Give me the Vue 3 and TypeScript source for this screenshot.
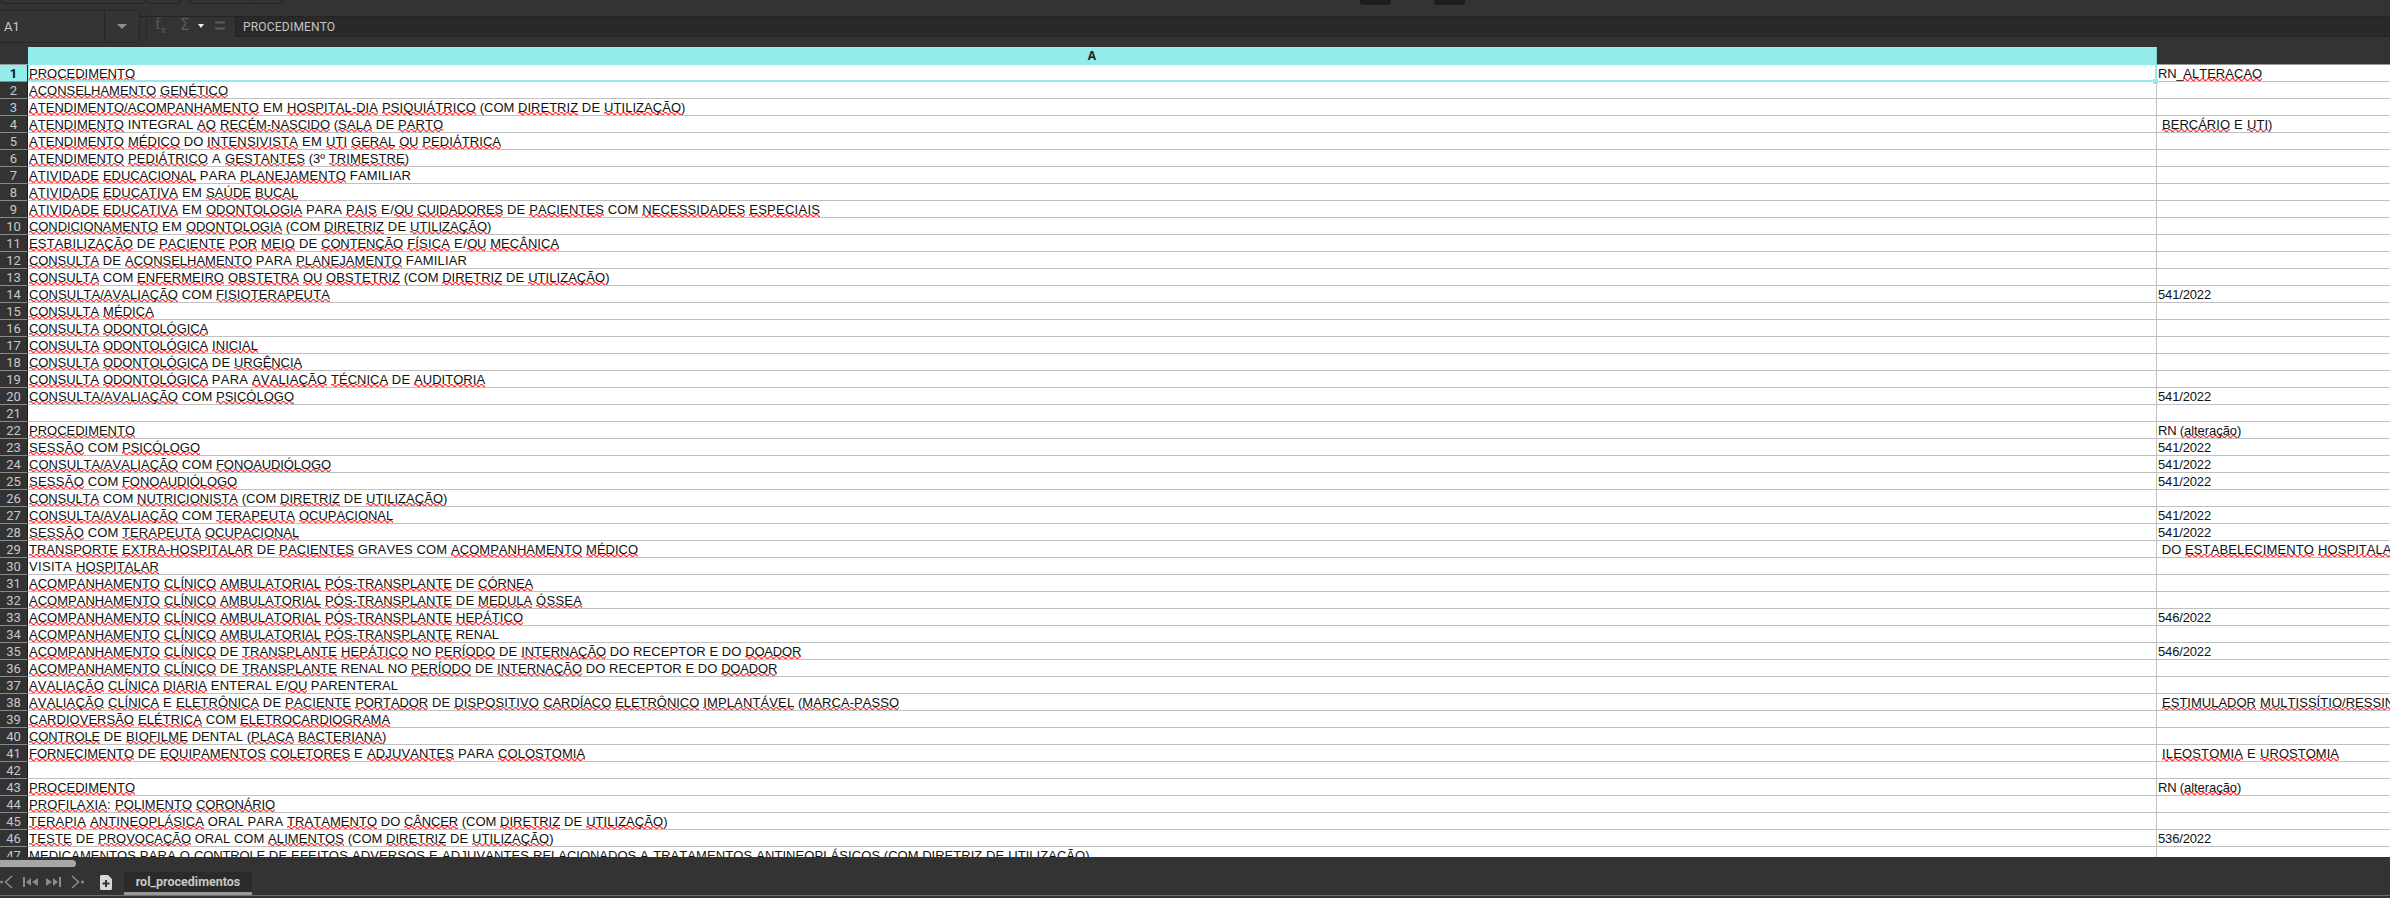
<script setup lang="ts">
// [word] marks what the spell checker flagged
const colA: string[] = [
  '[PROCEDIMENTO]',
  '[ACONSELHAMENTO] [GENÉTICO]',
  '[ATENDIMENTO/ACOMPANHAMENTO] EM [HOSPITAL-DIA] [PSIQUIÁTRICO] (COM [DIRETRIZ] DE [UTILIZAÇÃO])',
  '[ATENDIMENTO] INTEGRAL [AO] [RECÉM-NASCIDO] ([SALA] DE [PARTO]',
  '[ATENDIMENTO] [MÉDICO] DO [INTENSIVISTA] EM [UTI] [GERAL] [OU] [PEDIÁTRICA]',
  '[ATENDIMENTO] [PEDIÁTRICO] A [GESTANTES] (3º [TRIMESTRE])',
  '[ATIVIDADE] [EDUCACIONAL] PARA [PLANEJAMENTO] FAMILIAR',
  '[ATIVIDADE] [EDUCATIVA] EM [SAÚDE] [BUCAL]',
  '[ATIVIDADE] [EDUCATIVA] EM [ODONTOLOGIA] PARA [PAIS] E/[OU] [CUIDADORES] DE [PACIENTES] COM [NECESSIDADES] [ESPECIAIS]',
  '[CONDICIONAMENTO] EM [ODONTOLOGIA] (COM [DIRETRIZ] DE [UTILIZAÇÃO])',
  '[ESTABILIZAÇÃO] DE [PACIENTE] [POR] [MEIO] DE [CONTENÇÃO] [FÍSICA] E/[OU] [MECÂNICA]',
  '[CONSULTA] DE [ACONSELHAMENTO] PARA [PLANEJAMENTO] FAMILIAR',
  '[CONSULTA] COM [ENFERMEIRO] [OBSTETRA] [OU] [OBSTETRIZ] (COM [DIRETRIZ] DE [UTILIZAÇÃO])',
  '[CONSULTA/AVALIAÇÃO] COM [FISIOTERAPEUTA]',
  '[CONSULTA] [MÉDICA]',
  '[CONSULTA] [ODONTOLÓGICA]',
  '[CONSULTA] [ODONTOLÓGICA] [INICIAL]',
  '[CONSULTA] [ODONTOLÓGICA] DE [URGÊNCIA]',
  '[CONSULTA] [ODONTOLÓGICA] PARA [AVALIAÇÃO] [TÉCNICA] DE [AUDITORIA]',
  '[CONSULTA/AVALIAÇÃO] COM [PSICÓLOGO]',
  '',
  '[PROCEDIMENTO]',
  '[SESSÃO] COM [PSICÓLOGO]',
  '[CONSULTA/AVALIAÇÃO] COM [FONOAUDIÓLOGO]',
  '[SESSÃO] COM [FONOAUDIÓLOGO]',
  '[CONSULTA] COM [NUTRICIONISTA] (COM [DIRETRIZ] DE [UTILIZAÇÃO])',
  '[CONSULTA/AVALIAÇÃO] COM [TERAPEUTA] [OCUPACIONAL]',
  '[SESSÃO] COM [TERAPEUTA] [OCUPACIONAL]',
  '[TRANSPORTE] [EXTRA-HOSPITALAR] DE [PACIENTES] GRAVES COM [ACOMPANHAMENTO] [MÉDICO]',
  'VISITA [HOSPITALAR]',
  '[ACOMPANHAMENTO] [CLÍNICO] [AMBULATORIAL] [PÓS-TRANSPLANTE] DE [CÓRNEA]',
  '[ACOMPANHAMENTO] [CLÍNICO] [AMBULATORIAL] [PÓS-TRANSPLANTE] DE [MEDULA] [ÓSSEA]',
  '[ACOMPANHAMENTO] [CLÍNICO] [AMBULATORIAL] [PÓS-TRANSPLANTE] [HEPÁTICO]',
  '[ACOMPANHAMENTO] [CLÍNICO] [AMBULATORIAL] [PÓS-TRANSPLANTE] RENAL',
  '[ACOMPANHAMENTO] [CLÍNICO] DE [TRANSPLANTE] [HEPÁTICO] NO [PERÍODO] DE [INTERNAÇÃO] DO RECEPTOR E DO [DOADOR]',
  '[ACOMPANHAMENTO] [CLÍNICO] DE [TRANSPLANTE] RENAL NO [PERÍODO] DE [INTERNAÇÃO] DO RECEPTOR E DO [DOADOR]',
  '[AVALIAÇÃO] [CLÍNICA] [DIARIA] ENTERAL E/[OU] PARENTERAL',
  '[AVALIAÇÃO] [CLÍNICA] E [ELETRÔNICA] DE [PACIENTE] [PORTADOR] DE [DISPOSITIVO] [CARDÍACO] [ELETRÔNICO] [IMPLANTÁVEL] ([MARCA-PASSO]',
  '[CARDIOVERSÃO] [ELÉTRICA] COM [ELETROCARDIOGRAMA]',
  '[CONTROLE] DE [BIOFILME] DENTAL ([PLACA] [BACTERIANA])',
  '[FORNECIMENTO] DE [EQUIPAMENTOS] [COLETORES] E [ADJUVANTES] PARA [COLOSTOMIA]',
  '',
  '[PROCEDIMENTO]',
  '[PROFILAXIA]: [POLIMENTO] [CORONÁRIO]',
  '[TERAPIA] [ANTINEOPLÁSICA] ORAL PARA [TRATAMENTO] DO [CÂNCER] (COM [DIRETRIZ] DE [UTILIZAÇÃO])',
  '[TESTE] DE [PROVOCAÇÃO] ORAL COM [ALIMENTOS] (COM [DIRETRIZ] DE [UTILIZAÇÃO])',
  '[MEDICAMENTOS] PARA O [CONTROLE] DE [EFEITOS] [ADVERSOS] E [ADJUVANTES] [RELACIONADOS] A [TRATAMENTOS] [ANTINEOPLÁSICOS] (COM [DIRETRIZ] DE [UTILIZAÇÃO])',
]

const colB: Record<number, string> = {
  1: 'RN_[ALTERACAO]',
  4: ' [BERCÁRIO] E [UTI])',
  14: '541/2022',
  20: '541/2022',
  22: 'RN ([alteração])',
  23: '541/2022',
  24: '541/2022',
  25: '541/2022',
  27: '541/2022',
  28: '541/2022',
  29: ' DO [ESTABELECIMENTO] [HOSPITALAR]',
  33: '546/2022',
  35: '546/2022',
  38: ' [ESTIMULADOR] [MULTISSÍTIO/RESSINCRONIZADOR]',
  41: ' [ILEOSTOMIA] E [UROSTOMIA]',
  43: 'RN ([alteração])',
  46: '536/2022',
}

// the original renders with whole-pixel advances; this is how far each glyph
// lands from its natural 13px width
const nudge: Record<string, number> = {
  A: 0.33, B: 0.33, C: -0.39, D: -0.39, E: 0.33, F: 0.06, G: -0.11, H: -0.39, I: 0.39, J: 0.5,
  K: 0.33, L: -0.23, M: 0.17, N: -0.39, O: -0.11, P: 0.33, Q: -0.11, R: -0.39, S: 0.33, T: 0.06,
  U: -0.39, V: 0.33, W: -0.27, X: 0.33, Y: 0.33, Z: 0.06,
  ' ': 0.39, '/': 0.39, ':': 0.39, '(': -0.33, ')': -0.33, '-': -0.33,
  a: -0.23, c: 0.5, e: -0.23, l: 0.11, o: -0.23, r: -0.33, t: 0.39,
}

interface Chunk { text: string; bad: boolean; spacing: string }

function spacing(text: string): string {
  let sum = 0
  for (const ch of text.normalize('NFD')) sum += nudge[ch] ?? (/\d/.test(ch) ? -0.23 : 0)
  return (sum / text.length).toFixed(3) + 'px'
}

function chunks(src: string): Chunk[] {
  return src
    .split(/(\[[^\]]+\])/)
    .filter(Boolean)
    .map((p) => {
      const bad = p[0] === '['
      const text = bad ? p.slice(1, -1) : p
      return { text, bad, spacing: spacing(text) }
    })
}

const rows = colA.map((a, i) => ({
  n: i + 1,
  a: chunks(a),
  b: chunks(colB[i + 1] ?? ''),
}))
</script>

<template>
  <div class="app">
    <div class="toolbar">
      <div class="tb-group first"></div>
      <div class="tb-group second"></div>
      <div class="tb-group third"><span class="tb-split"></span></div>
      <div class="tb-fill"></div>
      <div class="tb-btn"></div>
      <div class="tb-btn"></div>
    </div>

    <div class="formula">
      <div class="namebox">
        <span class="nb-text">A1</span>
        <span class="nb-drop"><i class="tri"></i></span>
      </div>
      <div class="fx-icons">
        <span class="fx">f<sub>x</sub></span>
        <span class="sigma">Σ</span>
        <i class="tri small"></i>
        <svg class="eq" width="11" height="9" viewBox="0 0 11 9"><path d="M0 1.5h10M0 7.5h10" stroke="#5c5c5c" stroke-width="2" /></svg>
      </div>
      <div class="input">PROCEDIMENTO</div>
    </div>

    <div class="sheet">
      <div class="col-head">
        <div class="corner"></div>
        <div class="head-a">A</div>
      </div>
      <div class="body">
        <div v-for="r in rows" :key="r.n" class="row">
          <div class="rn" :class="{ active: r.n === 1 }">{{ r.n }}</div>
          <div class="cell a">
            <template v-for="(c, k) in r.a" :key="k"><span :class="{ bad: c.bad }" :style="{ letterSpacing: c.spacing }">{{ c.text }}</span></template>
          </div>
          <div class="cell b">
            <template v-for="(c, k) in r.b" :key="k"><span :class="{ bad: c.bad }" :style="{ letterSpacing: c.spacing }">{{ c.text }}</span></template>
          </div>
        </div>
        <div class="cursor"><i class="handle"></i></div>
      </div>
    </div>

    <div class="scrollbar"><div class="thumb"></div></div>

    <div class="tabs">
      <div class="nav">
        <svg width="13" height="14" viewBox="0 0 13 14"><circle cx="1.5" cy="7" r="1.5" fill="#8a8a8a" /><path d="M12 1L5.5 7l6.5 6" fill="none" stroke="#8a8a8a" stroke-width="1.6" /></svg>
        <svg width="16" height="10" viewBox="0 0 16 10"><path d="M1 0v10" stroke="#8a8a8a" stroke-width="2" /><path d="M8 1L3 5l5 4zM15 1l-6 4 6 4z" fill="#8a8a8a" /></svg>
        <svg width="16" height="10" viewBox="0 0 16 10"><path d="M15 0v10" stroke="#8a8a8a" stroke-width="2" /><path d="M8 1l5 4-5 4zM1 1l6 4-6 4z" fill="#8a8a8a" /></svg>
        <svg width="13" height="14" viewBox="0 0 13 14"><path d="M1 1l6.5 6L1 13" fill="none" stroke="#8a8a8a" stroke-width="1.6" /><circle cx="11.5" cy="7" r="1.5" fill="#8a8a8a" /></svg>
      </div>
      <svg class="add" width="12" height="15" viewBox="0 0 12 15"><path d="M1.5 0H8l4 4v9.5a1.5 1.5 0 0 1-1.5 1.5h-9A1.5 1.5 0 0 1 0 13.500V1.500A1.500 1.500 0 0 1 1.500 0z" fill="#d8d8d8" /><path d="M6 5v7M2.500 8.500h7" stroke="#333" stroke-width="2" /></svg>
      <div class="tab">rol_procedimentos</div>
    </div>
  </div>
</template>

<style scoped>
.app {
  width: 2390px;
  height: 898px;
  display: flex;
  flex-direction: column;
  overflow: hidden;
  background: #333;
  font-family: Roboto, "Open Sans", sans-serif;
}

.toolbar {
  height: 17px;
  flex: none;
  display: flex;
  align-items: flex-start;
  box-sizing: border-box;
  background: #333;
  border-bottom: 1px solid #242424;
}
.tb-group {
  height: 4px;
  flex: none;
  border: 1px solid #262626;
  border-top: 0;
  border-radius: 0 0 4px 4px;
  box-sizing: border-box;
}
.tb-group.first { width: 146px; }
.tb-group.second { width: 35px; }
.tb-group.third { width: 94px; margin-left: 8px; }
.tb-split {
  display: block;
  width: 1px;
  height: 4px;
  margin-left: 59px;
  background: #262626;
}
.tb-fill { flex: none; width: 1077px; }
.tb-btn {
  width: 31px;
  height: 5px;
  flex: none;
  background: #1d1d1d;
  border-radius: 0 0 3px 3px;
  margin-right: 43px;
}

.formula {
  height: 30px;
  flex: none;
  display: flex;
  align-items: flex-start;
  background: #333;
}
.namebox {
  width: 140px;
  height: 33px;
  margin-top: -7px;
  flex: none;
  display: flex;
  box-sizing: border-box;
  background: #343434;
  border: 1px solid #272727;
  border-left: 0;
  border-radius: 0 5px 5px 0;
  color: #c6c6c6;
  font-size: 13px;
  line-height: 31px;
  position: relative;
}
.nb-text { width: 105px; padding-left: 4px; box-sizing: border-box; border-right: 1px solid #272727; }
.nb-drop { flex: 1; display: flex; align-items: center; justify-content: center; }
.tri {
  display: block;
  width: 0;
  height: 0;
  border-left: 5px solid transparent;
  border-right: 5px solid transparent;
  border-top: 5px solid #8c8c8c;
}
.tri.small {
  border-left-width: 3.500px;
  border-right-width: 3.500px;
  border-top: 4px solid #f0f0f0;
  margin: 2px 11px 0 9px;
}
.fx-icons {
  width: 89px;
  height: 28px;
  flex: none;
  display: flex;
  align-items: center;
  margin-top: -6px;
  padding-left: 8px;
  box-sizing: border-box;
  border-left: 1px solid #2a2a2a;
  margin-left: 6px;
  color: #5c5c5c;
  position: relative;
}
.fx {
  font-family: "Liberation Serif", serif;
  font-size: 17px;
  width: 25px;
}
.fx sub { font-size: 11px; }
.sigma { font-size: 15px; font-family: "DejaVu Sans", sans-serif; }
.input {
  flex: 1;
  height: 20px;
  box-sizing: border-box;
  background: #292929;
  border-bottom: 1px solid #222;
  border-left: 1px solid #242424;
  padding-left: 7px;
  color: #c4c4c4;
  font-size: 12px;
  line-height: 21px;
  letter-spacing: 0.2px;
}

.sheet {
  height: 810px;
  flex: none;
  overflow: hidden;
  background: #fff;
}
.col-head {
  height: 18px;
  display: flex;
  background: #333;
  box-sizing: border-box;
  border-bottom: 1px solid #999;
}
.corner { width: 28px; flex: none; }
.head-a {
  width: 2129px;
  flex: none;
  background: #92ecec;
  box-sizing: border-box;
  border-right: 1px solid #7fcfcf;
  border-bottom: 1px solid #7fcfcf;
  height: 18px;
  text-align: center;
  color: #222;
  font: bold 12px/18px "Open Sans", sans-serif;
}
.body { position: relative; }
.row {
  height: 17px;
  display: flex;
  box-sizing: border-box;
  color: #111;
  font: 13px/18px "Liberation Sans", Arial, sans-serif;
  font-kerning: none;
}
.rn {
  width: 28px;
  flex: none;
  box-sizing: border-box;
  background: #333;
  border-bottom: 1px solid #8a8a8a;
  border-right: 1px solid #1c1c1c;
  color: #c8c8c8;
  font: 13px/17px Roboto, sans-serif;
  text-align: center;
}
.rn.active {
  background: #92ecec;
  color: #111;
  font-weight: 700;
}
.cell {
  box-sizing: border-box;
  border-bottom: 1px solid #c0c0c0;
  white-space: pre;
  overflow: hidden;
  padding-left: 1px;
  height: 17px;
}
.cell.a { width: 2129px; flex: none; border-right: 1px solid #c0c0c0; }
.cell.b { flex: 1; }
.bad {
  background: url("data:image/svg+xml,%3Csvg xmlns='http://www.w3.org/2000/svg' width='6' height='3'%3E%3Cpath d='M0 1.500Q1.500 -0.500 3 1.500T6 1.500' fill='none' stroke='%23ff2020' stroke-width='1.200'/%3E%3C/svg%3E") repeat-x 0 100% / 6px 3px;
}
.cursor {
  position: absolute;
  left: 28px;
  top: -1px;
  width: 2129px;
  height: 18px;
  box-sizing: border-box;
  border: 2px solid #92ecec;
  border-left-width: 1px;
  border-top-width: 1px;
  pointer-events: none;
}
.handle {
  position: absolute;
  right: -3px;
  bottom: -4px;
  width: 5px;
  height: 5px;
  background: #92ecec;
}

.scrollbar {
  height: 15px;
  flex: none;
  padding-top: 3px;
  box-sizing: border-box;
}
.thumb {
  width: 76px;
  height: 7px;
  background: #a6a6a6;
  border-radius: 0 4px 4px 0;
}
.tabs {
  height: 23px;
  flex: none;
  display: flex;
  align-items: flex-start;
  border-bottom: 1px solid #6f6f6f;
}
.nav {
  width: 100px;
  flex: none;
  display: flex;
  align-items: center;
  height: 20px;
}
.nav svg:nth-child(2) { margin-left: 10px; }
.nav svg:nth-child(3) { margin-left: 6px; }
.nav svg:nth-child(4) { margin-left: 10px; }
.add { margin-top: 3px; flex: none; }
.tab {
  margin-left: 12px;
  width: 128px;
  height: 23px;
  box-sizing: border-box;
  background: #2a2a2a;
  border-bottom: 3px solid #999;
  color: #c8c8c8;
  font: bold 12.500px/20px Roboto, sans-serif;
  text-align: center;
}
</style>

<style>
html, body { margin: 0; background: #333; overflow: hidden; }
</style>
